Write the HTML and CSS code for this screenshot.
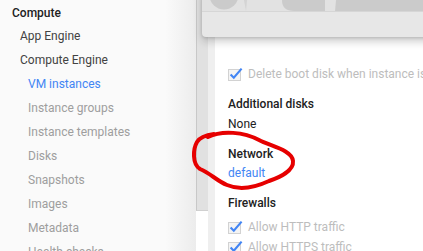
FILE: index.html
```html
<!DOCTYPE html>
<html lang="en">
<head>
<meta charset="utf-8">
<title>Compute Engine - VM instances</title>
<link rel="stylesheet" href="styles.css">
</head>
<body>
<div class="app">
  <nav class="sidebar">
    <div class="nav-head">Compute</div>
    <div class="nav-item l1">App Engine</div>
    <div class="nav-item l1">Compute Engine</div>
    <div class="nav-item l2 active">VM instances</div>
    <div class="nav-item l2">Instance groups</div>
    <div class="nav-item l2">Instance templates</div>
    <div class="nav-item l2">Disks</div>
    <div class="nav-item l2">Snapshots</div>
    <div class="nav-item l2">Images</div>
    <div class="nav-item l2">Metadata</div>
    <div class="nav-item l2">Health checks</div>
  </nav>
  <div class="gutter"></div>
  <div class="strip"></div>
  <main class="content">
    <label class="check">
      <span class="box"><svg width="16" height="14" viewBox="0 0 16 14"><rect x="0.5" y="2.5" width="12" height="11" fill="#f4f4f4" stroke="#d2d2d2"/><path d="M2.6 7.6 L5.8 10.8 L13.6 1.6" fill="none" stroke="#4285f4" stroke-width="2.1"/></svg></span>
      <span>Delete boot disk when instance is deleted</span>
    </label>
    <section class="field">
      <div class="title">Additional disks</div>
      <div class="value">None</div>
    </section>
    <section class="field">
      <div class="title">Network</div>
      <a class="value link">default</a>
    </section>
    <section class="field">
      <div class="title">Firewalls</div>
      <div class="checks">
        <label class="check">
          <span class="box"><svg width="16" height="14" viewBox="0 0 16 14"><rect x="0.5" y="2.5" width="12" height="11" fill="#f4f4f4" stroke="#d2d2d2"/><path d="M2.6 7.6 L5.8 10.8 L13.6 1.6" fill="none" stroke="#4285f4" stroke-width="2.1"/></svg></span>
          <span>Allow HTTP traffic</span>
        </label>
        <label class="check">
          <span class="box"><svg width="16" height="14" viewBox="0 0 16 14"><rect x="0.5" y="2.5" width="12" height="11" fill="#f4f4f4" stroke="#d2d2d2"/><path d="M2.6 7.6 L5.8 10.8 L13.6 1.6" fill="none" stroke="#4285f4" stroke-width="2.1"/></svg></span>
          <span>Allow HTTPS traffic</span>
        </label>
      </div>
    </section>
  </main>
</div>

<div class="dialog">
  <div class="dialog-media">
    <svg width="230" height="22" viewBox="0 0 230 22" preserveAspectRatio="none">
      <rect width="230" height="22" fill="#e2e2e2"/>
      <circle cx="22" cy="5" r="14.5" fill="#cbcbcb"/>
      <path d="M40 0 L46 0 L44 21 Z" fill="#d4d4d4"/>
      <path d="M80 0 L123 0 L123 21 L92 21 Q80 21 80 10 Z" fill="#cbcbcb"/>
      <path d="M135 0 L230 0 L230 21 L133 21 Z" fill="#cbcbcb"/>
    </svg>
  </div>
  <div class="dialog-bar"></div>
</div>

<svg class="annotation" width="423" height="251" viewBox="0 0 423 251">
  <path d="M208 137 C 222 130, 244 132, 259 140 C 270 146, 292 150, 293 161 C 294 171, 280 177, 269 181 C 256 187, 241 191, 227 185 C 217 181, 210 173, 200 169 C 192 164, 193 149, 197 142 C 200 137, 206 135, 214 134"
        fill="none" stroke="#e60000" stroke-width="4" stroke-linecap="round" stroke-linejoin="round"/>
</svg>
</body>
</html>
```
FILE: styles.css
```css
* { box-sizing: border-box; }

html, body {
  margin: 0;
  padding: 0;
}

body {
  width: 423px;
  height: 251px;
  overflow: hidden;
  position: relative;
  font-family: Roboto, "Noto Sans", Arial, sans-serif;
  font-size: 12px;
  background: #ffffff;
}

.app {
  display: flex;
  height: 251px;
}

.sidebar {
  width: 196px;
  flex: none;
  padding-top: 3px;
  background: linear-gradient(to right, #fafafa 0, #fafafa 165px, #ececec 196px);
}

.nav-head {
  padding-left: 12px;
  line-height: 21px;
  font-weight: 500;
  color: #212121;
}

.nav-item {
  line-height: 24px;
  white-space: nowrap;
}

.nav-item.l1 {
  padding-left: 20px;
  color: #424242;
}

.nav-item.l2 {
  padding-left: 28px;
  color: #9e9e9e;
}

.nav-item.active {
  color: #4285f4;
}

.gutter {
  width: 12px;
  flex: none;
  height: 211px;
  background: #e1e1e1;
  border-left: 1px solid #c8c8c8;
  border-bottom: 1px solid #d0d0d0;
}

.strip {
  width: 7px;
  flex: none;
  background: #efefef;
}

.content {
  flex: 1;
  padding: 64px 0 0 13px;
  white-space: nowrap;
  overflow: hidden;
}

.check {
  display: flex;
  align-items: center;
  height: 20px;
  line-height: 20px;
  color: #bdbdbd;
}

.box {
  width: 20px;
  flex: none;
  display: flex;
  align-items: center;
}

.box svg {
  display: block;
  overflow: visible;
}

.field {
  margin-top: 10px;
}

.title {
  line-height: 20px;
  font-weight: 500;
  color: #212121;
}

.value {
  display: block;
  line-height: 20px;
  color: #212121;
}

.link {
  color: #4285f4;
  line-height: 19px;
}

.checks {
  margin-top: 4px;
}

.dialog {
  position: absolute;
  left: 202px;
  top: -10px;
  width: 240px;
  height: 47px;
  border-radius: 4px;
  overflow: hidden;
  background: #e7e7e7;
  box-shadow: 0 4px 10px rgba(0, 0, 0, 0.22), 0 1px 3px rgba(0, 0, 0, 0.12);
}

.dialog-media {
  height: 22px;
  border-bottom: 1px solid #d6d6d6;
  overflow: hidden;
}

.dialog-media svg {
  display: block;
}

.dialog-bar {
  height: 25px;
}

.annotation {
  position: absolute;
  left: 0;
  top: 0;
  pointer-events: none;
}
```
